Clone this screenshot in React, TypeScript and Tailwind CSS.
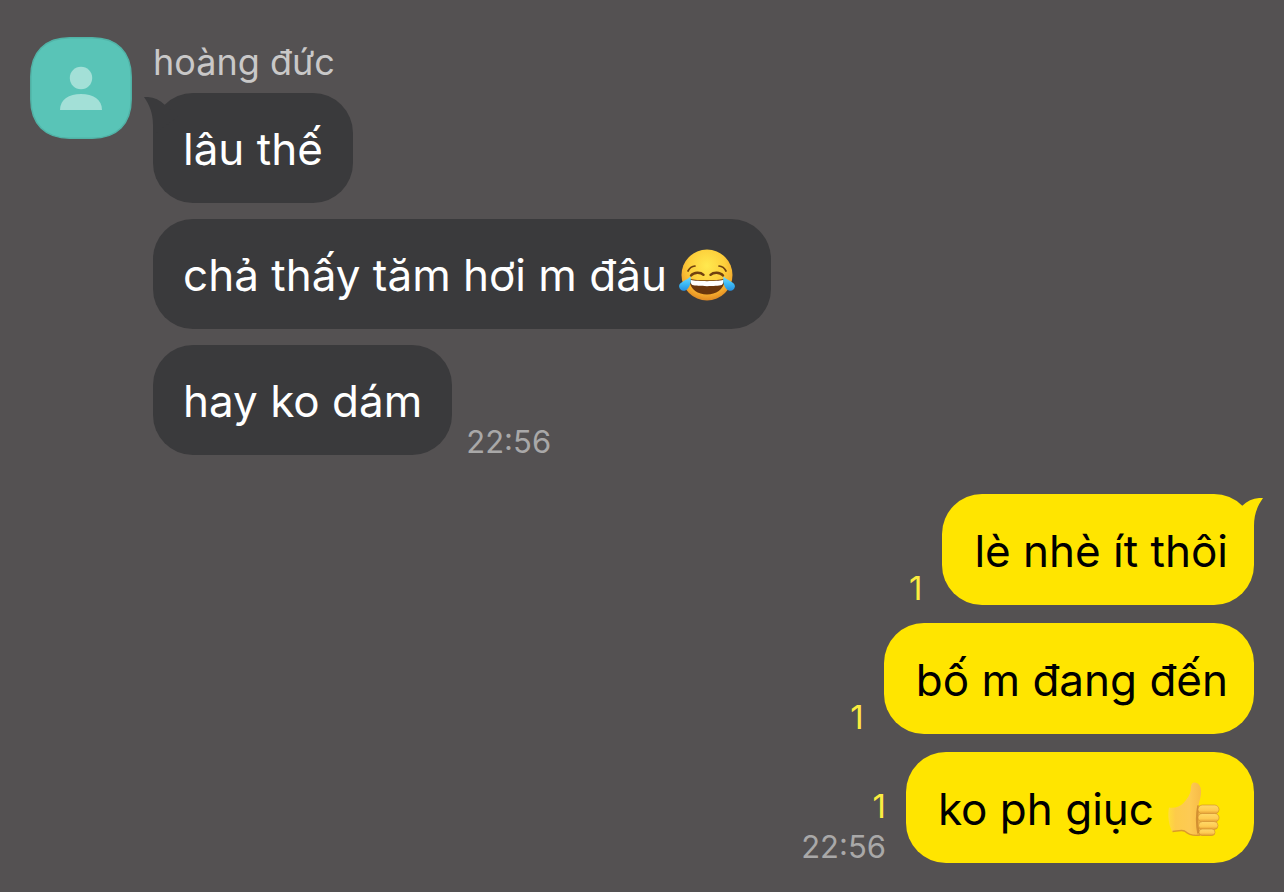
import React from 'react'
import clsx from 'clsx'

type Emoji = 'joy' | 'thumbsUp'

interface Message {
  id: number
  text: string
  emoji?: Emoji
  time?: string
  unread?: number
}

const incoming: Message[] = [
  { id: 1, text: 'lâu thế' },
  { id: 2, text: 'chả thấy tăm hơi m đâu', emoji: 'joy' },
  { id: 3, text: 'hay ko dám', time: '22:56' },
]

const outgoing: Message[] = [
  { id: 4, text: 'lè nhè ít thôi', unread: 1 },
  { id: 5, text: 'bố m đang đến', unread: 1 },
  { id: 6, text: 'ko ph giục', emoji: 'thumbsUp', time: '22:56', unread: 1 },
]

const JoyEmoji = () => (
  <svg role="img" aria-label="Face with tears of joy" viewBox="0 0 56 56" className="w-14 h-14 shrink-0">
    <defs>
      <radialGradient id="joyFace" cx="0.5" cy="0.32" r="0.7">
        <stop offset="0" stopColor="#ffe94f" />
        <stop offset="0.5" stopColor="#fdcf3b" />
        <stop offset="0.82" stopColor="#f3a72c" />
        <stop offset="1" stopColor="#dd8420" />
      </radialGradient>
      <linearGradient id="joyTear" x1="0" y1="0" x2="0" y2="1">
        <stop offset="0" stopColor="#7ad9fb" />
        <stop offset="0.5" stopColor="#3fbcf5" />
        <stop offset="1" stopColor="#2590e0" />
      </linearGradient>
    </defs>
    <circle cx="28" cy="28" r="25.5" fill="url(#joyFace)" />
    <g fill="none" stroke="#714210" strokeLinecap="round">
      <path d="M9 24c1.500-3 4.300-4.800 7-5" strokeWidth="1.700" />
      <path d="M47 24c-1.500-3-4.300-4.800-7-5" strokeWidth="1.700" />
      <path d="M12 28.500c3-3.600 9.500-3.600 12.500-.7" strokeWidth="2.400" />
      <path d="M44 28.500c-3-3.600-9.500-3.600-12.500-.7" strokeWidth="2.400" />
    </g>
    <path d="M11.500 32c5 1.800 28 1.800 33 0 1.200-.4 1.500.3 1.300 1.500C44.500 42.500 37 47.500 28 47.500S11.500 42.500 10.200 33.500c-.2-1.200.1-1.900 1.300-1.500z" fill="#6a360d" />
    <path d="M12 33c6 1.500 26 1.500 32 0 .7-.2.800.3.600 1-.5 2.200-1 3.500-2 4-5 1.500-24.200 1.500-29.200 0-1-.5-1.500-1.800-2-4-.2-.7-.1-1.200.6-1z" fill="#fff" />
    <path d="M11.500 29.500c1 5.500-.6 11.500-4.700 13.700-3 1.500-6.400-.2-6.700-3.700-.4-4.500 7-5.500 11.400-10z" fill="url(#joyTear)" />
    <path d="M44.500 29.500c-1 5.500.6 11.500 4.700 13.700 3 1.500 6.400-.2 6.700-3.700.4-4.500-7-5.500-11.400-10z" fill="url(#joyTear)" />
  </svg>
)

const ThumbsUpEmoji = () => (
  <svg role="img" aria-label="Thumbs up" viewBox="0 0 56 56" className="w-14 h-14 shrink-0">
    <defs>
      <linearGradient id="thumbSkin" x1="0" y1="0" x2="1" y2="0">
        <stop offset="0" stopColor="#ffdc3c" />
        <stop offset="0.2" stopColor="#fdcb4a" />
        <stop offset="0.6" stopColor="#fdca54" />
        <stop offset="1" stopColor="#f6b745" />
      </linearGradient>
      <linearGradient id="thumbFinger" x1="0" y1="0" x2="0" y2="1">
        <stop offset="0" stopColor="#ffd968" />
        <stop offset="0.6" stopColor="#fecb52" />
        <stop offset="1" stopColor="#e29a33" />
      </linearGradient>
    </defs>
    <path d="M3 26.500c6 .8 11-.8 14.500-4.500 4-4.300 6.800-8.300 7.300-13.500.2-3 .2-6.800 3.300-7 4.500-.3 6.800 4 7 8.500.2 5-1.500 9-2.600 14L38 54c-9 1.500-15.500-.5-19.500-4-3-1.500-8 0-12.500.5C2.500 43 1.500 34 3 26.500z" fill="url(#thumbSkin)" />
    <path d="M6.500 50.500c4-.2 9-1.900 12-.5 4 3.500 10 5 15.500 4" fill="none" stroke="#d18a2f" strokeWidth="1.400" opacity="0.8" />
    <path d="M32.500 24.500c-1.600 8-1.600 20 0 28" fill="none" stroke="#b97022" strokeWidth="2.500" opacity="0.6" />
    <rect x="32" y="24" width="21" height="9" rx="4.500" fill="url(#thumbFinger)" stroke="#cf8a2b" strokeWidth="0.600" />
    <rect x="32" y="32.500" width="21" height="8.500" rx="4.200" fill="url(#thumbFinger)" stroke="#cf8a2b" strokeWidth="0.600" />
    <rect x="32.500" y="40.500" width="19.500" height="8" rx="4" fill="url(#thumbFinger)" stroke="#cf8a2b" strokeWidth="0.600" />
    <rect x="33" y="48" width="16" height="6.500" rx="3.200" fill="url(#thumbFinger)" stroke="#cf8a2b" strokeWidth="0.600" />
  </svg>
)

const Avatar = () => (
  <svg role="img" aria-label="hoàng đức" viewBox="0 0 102 102" className="w-[102px] h-[102px] shrink-0">
    <path
      d="M40 .8H62C87 .8 101.200 15 101.200 40V62C101.200 87 87 101.200 62 101.200H40C15 101.200 .8 87 .8 62V40C.8 15 15 .8 40 .8z"
      fill="#59c4b7"
      stroke="#51b3a7"
      strokeWidth="1.500"
    />
    <circle cx="51" cy="41" r="11.200" fill="#a3e0d7" />
    <path d="M30 73c0-10.500 9-16 21-16s21 5.500 21 16z" fill="#a3e0d7" />
  </svg>
)

interface BubbleProps {
  message: Message
  mine?: boolean
  tail?: boolean
}

const Bubble = ({ message, mine, tail }: BubbleProps) => (
  <div
    className={clsx(
      'relative flex items-center gap-3 rounded-[40px] pt-[2px] text-[44px] leading-[56px]',
      mine ? 'bg-[#ffe500] text-black pl-8 h-[111px]' : 'bg-[#3a3a3c] text-white pl-[30px] h-[110px]',
      mine && (message.emoji ? 'pr-8' : 'pr-[26px]'),
      !mine && (message.emoji ? 'pr-9' : 'pr-[30px]')
    )}
  >
    {tail && (
      <svg
        aria-hidden="true"
        viewBox="0 0 42 42"
        className={clsx('absolute w-[42px] h-[42px]', mine ? 'top-1 -right-[9px] -scale-x-100 text-[#ffe500]' : 'top-1 -left-[9px] text-[#3a3a3c]')}
      >
        <path d="M0 0C8-.5 15 2 21 8L34 20 9 38V28C9 16 5.500 8 0 0z" fill="currentColor" />
      </svg>
    )}
    <p className="whitespace-nowrap">{message.text}</p>
    {message.emoji === 'joy' && <JoyEmoji />}
    {message.emoji === 'thumbsUp' && <ThumbsUpEmoji />}
  </div>
)

const Time = ({ value, className }: { value: string; className?: string }) => (
  <time className={clsx('text-[31px] text-[#a9a8a8]', className)}>{value}</time>
)

export default function App() {
  return (
    <main className="min-h-screen bg-[#545152] px-[30px] pt-[37px] pb-7 font-['Inter','Noto_Sans',sans-serif]">
      <section className="flex items-start gap-[21px]">
        <Avatar />
        <div>
          <h2 className="text-[36px] leading-[50px] mb-[6px] text-[#c9c8c8]">hoàng đức</h2>
          <ul className="flex flex-col gap-4">
            {incoming.map((message, index) => (
              <li key={message.id} className="flex items-end gap-[14px]">
                <Bubble message={message} tail={index === 0} />
                {message.time && <Time value={message.time} className="leading-[26px]" />}
              </li>
            ))}
          </ul>
        </div>
      </section>

      <ul className="mt-[39px] flex flex-col gap-[18px]">
        {outgoing.map((message, index) => (
          <li key={message.id} className="flex items-end justify-end gap-5">
            <div className="flex flex-col items-end gap-2">
              <span className="text-[33px] leading-[34px] text-[#fbec3f]">{message.unread}</span>
              {message.time && <Time value={message.time} className="leading-8" />}
            </div>
            <Bubble message={message} mine tail={index === 0} />
          </li>
        ))}
      </ul>
    </main>
  )
}
